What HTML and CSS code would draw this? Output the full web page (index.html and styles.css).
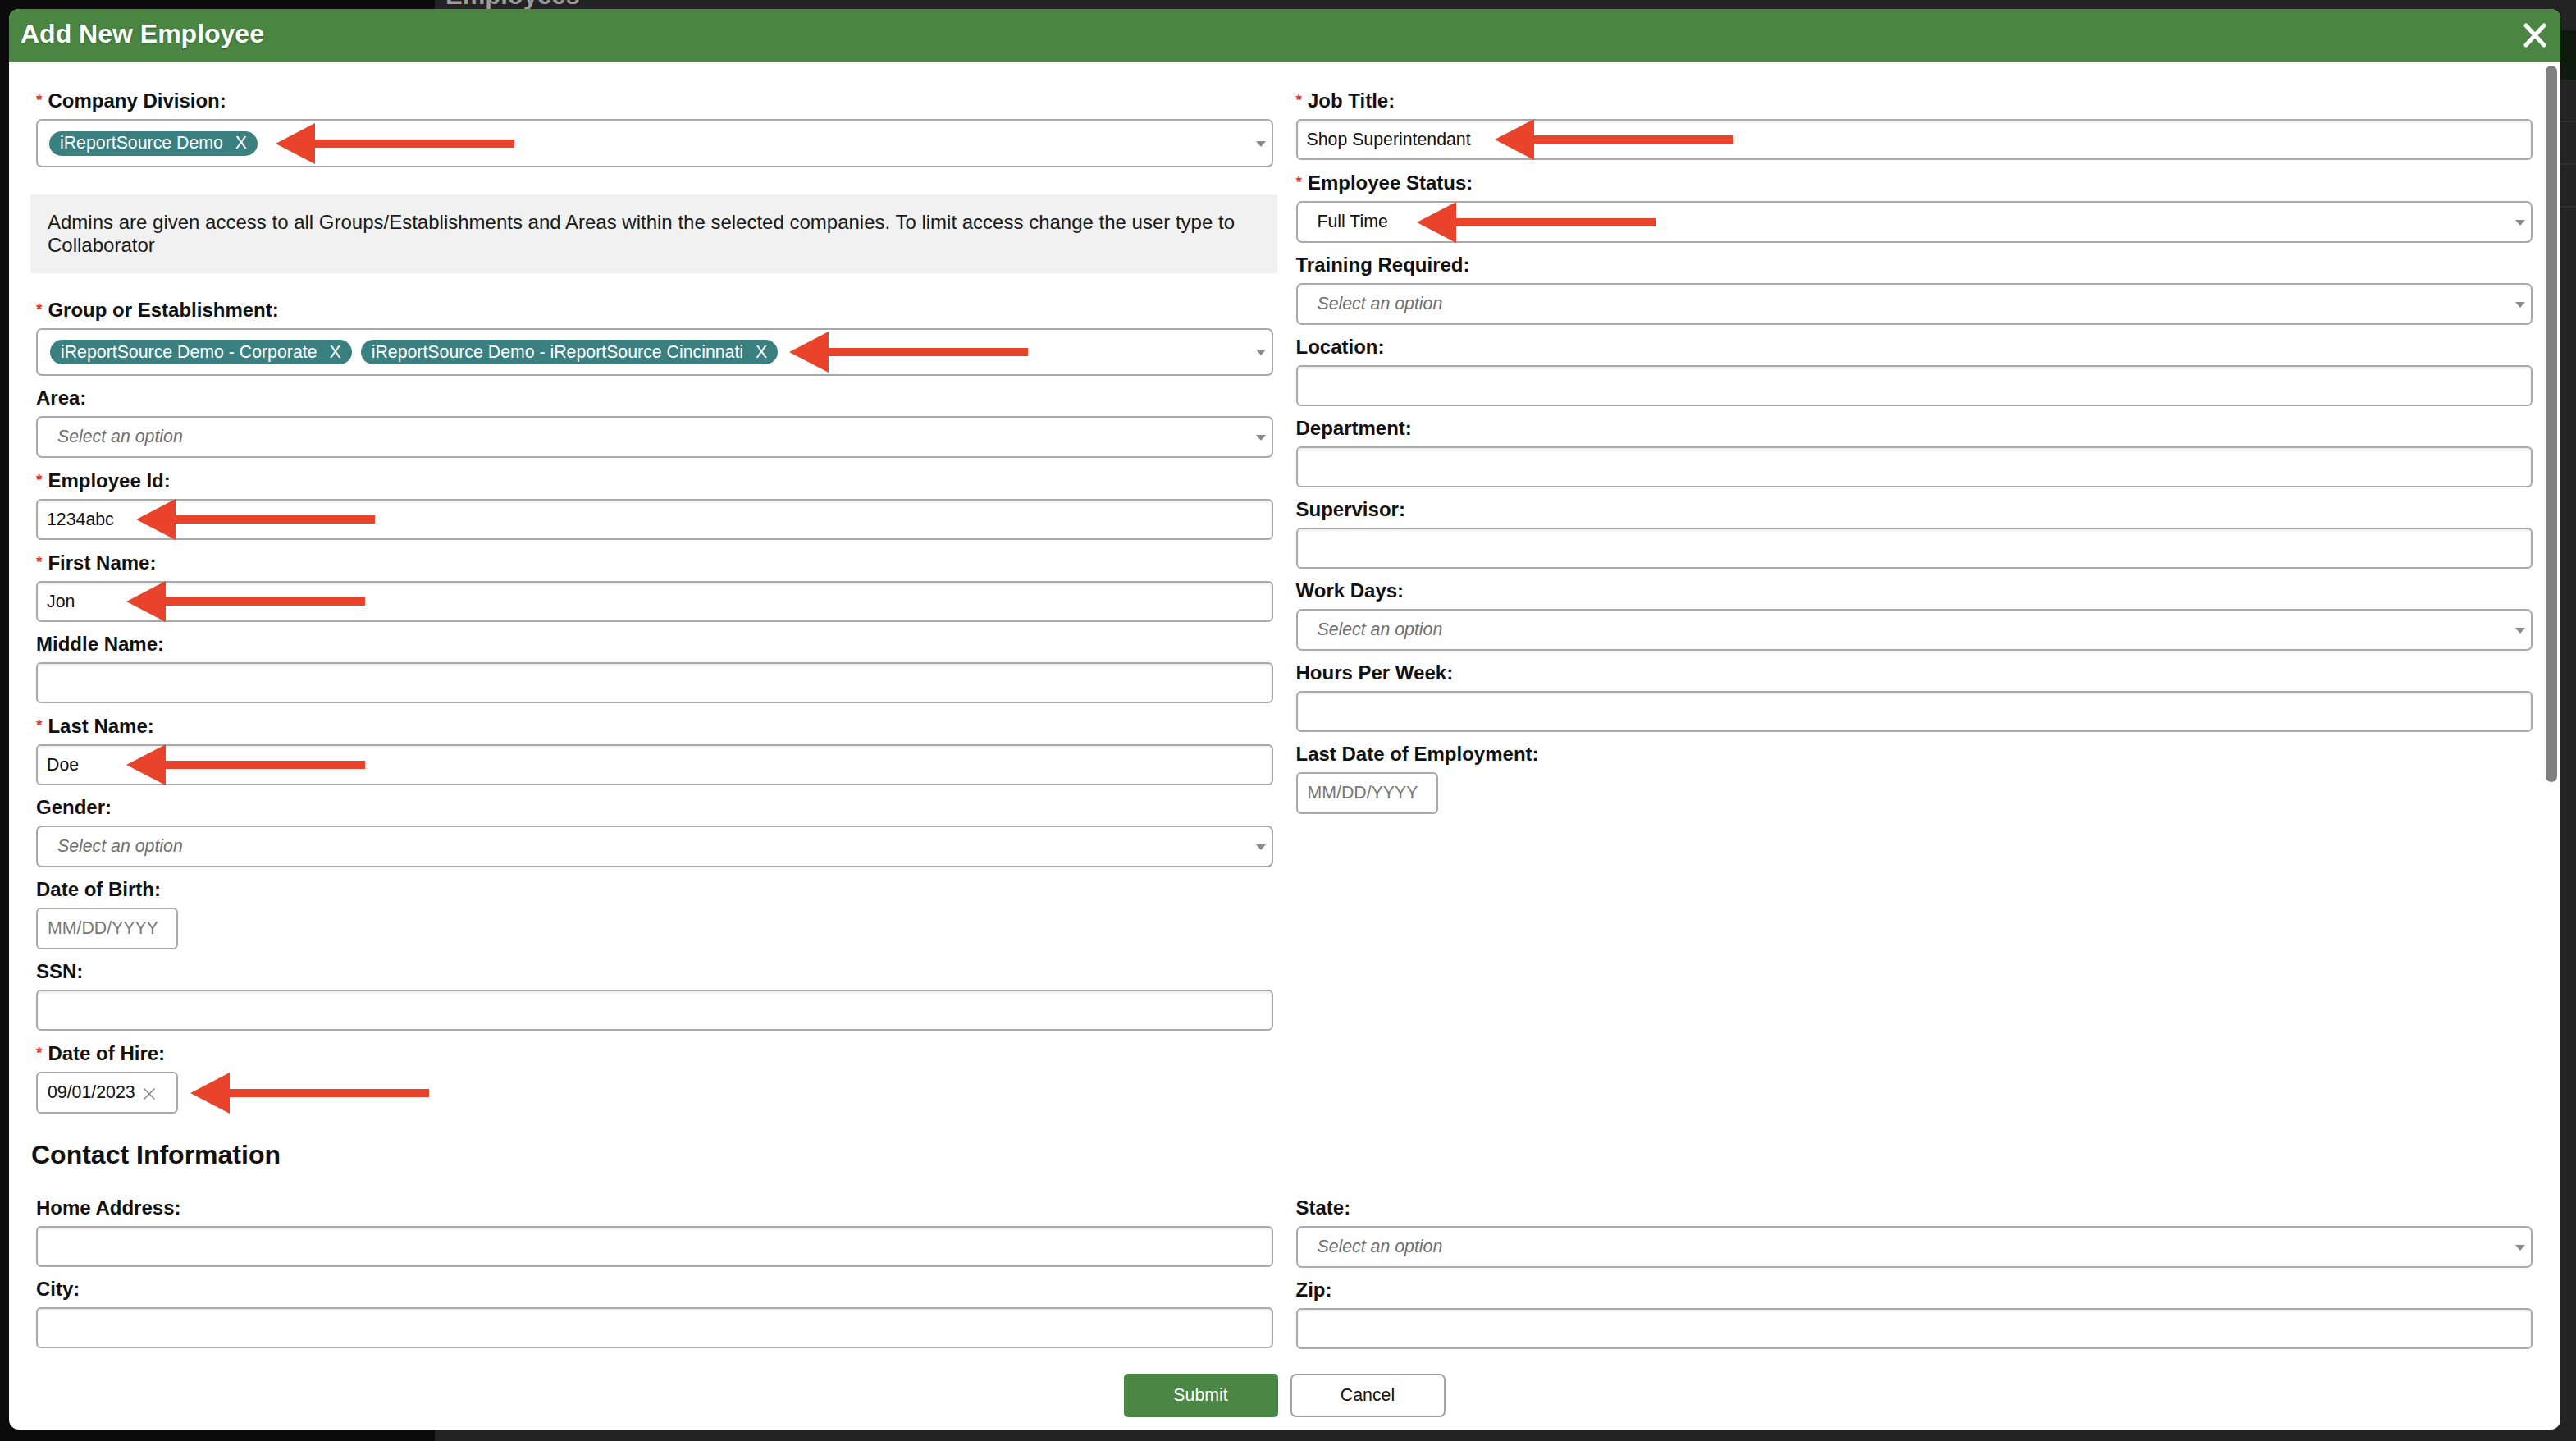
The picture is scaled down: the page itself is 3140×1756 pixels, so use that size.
FILE: index.html
```html
<!DOCTYPE html>
<html lang="en">
<head>
<meta charset="utf-8">
<title>Add New Employee</title>
<link rel="stylesheet" href="styles.css">
</head>
<body>
<aside class="sidebar"></aside>
<main class="page">
  <h1 class="page-title">Employees</h1>
  <div class="page-toolbar"></div>
  <div class="page-row"></div>
  <div class="page-row"></div>
  <div class="page-row"></div>
</main>

<div class="modal">
  <header class="modal-header">
    <h2 class="modal-title">Add New Employee</h2>
    <svg class="close" width="30" height="30" viewBox="0 0 30 30"><path d="M4 3 L26 27 M26 3 L4 27" stroke="#fff" stroke-width="5" stroke-linecap="round"/></svg>
  </header>

  <div class="modal-body">
    <div class="cols">
      <div class="col">
        <div class="field">
          <label class="lbl"><span class="req">*</span>Company Division:</label>
          <div class="control">
            <div class="select multi"><span class="tag">iReportSource Demo<span class="x">X</span></span></div>
            <svg class="arrow a-company" viewBox="0 0 291 50"><path d="M0 25 L48 0 L48 20 L291 20 L291 30 L48 30 L48 50 Z"/></svg>
          </div>
        </div>
        <div class="info">Admins are given access to all Groups/Establishments and Areas within the selected companies. To limit access change the user type to Collaborator</div>
        <div class="field">
          <label class="lbl"><span class="req">*</span>Group or Establishment:</label>
          <div class="control">
            <div class="select multi multi-group"><span class="tag">iReportSource Demo - Corporate<span class="x">X</span></span><span class="tag">iReportSource Demo - iReportSource Cincinnati<span class="x">X</span></span></div>
            <svg class="arrow a-group" viewBox="0 0 291 50"><path d="M0 25 L48 0 L48 20 L291 20 L291 30 L48 30 L48 50 Z"/></svg>
          </div>
        </div>
        <div class="field">
          <label class="lbl">Area:</label>
          <div class="select"><span class="placeholder">Select an option</span></div>
        </div>
        <div class="field">
          <label class="lbl"><span class="req">*</span>Employee Id:</label>
          <div class="control">
            <input class="input" type="text" value="1234abc">
            <svg class="arrow a-empid" viewBox="0 0 291 50"><path d="M0 25 L48 0 L48 20 L291 20 L291 30 L48 30 L48 50 Z"/></svg>
          </div>
        </div>
        <div class="field">
          <label class="lbl"><span class="req">*</span>First Name:</label>
          <div class="control">
            <input class="input" type="text" value="Jon">
            <svg class="arrow a-name" viewBox="0 0 291 50"><path d="M0 25 L48 0 L48 20 L291 20 L291 30 L48 30 L48 50 Z"/></svg>
          </div>
        </div>
        <div class="field">
          <label class="lbl">Middle Name:</label>
          <input class="input" type="text" value="">
        </div>
        <div class="field">
          <label class="lbl"><span class="req">*</span>Last Name:</label>
          <div class="control">
            <input class="input" type="text" value="Doe">
            <svg class="arrow a-name" viewBox="0 0 291 50"><path d="M0 25 L48 0 L48 20 L291 20 L291 30 L48 30 L48 50 Z"/></svg>
          </div>
        </div>
        <div class="field">
          <label class="lbl">Gender:</label>
          <div class="select"><span class="placeholder">Select an option</span></div>
        </div>
        <div class="field">
          <label class="lbl">Date of Birth:</label>
          <input class="input date" type="text" placeholder="MM/DD/YYYY">
        </div>
        <div class="field">
          <label class="lbl">SSN:</label>
          <input class="input" type="text" value="">
        </div>
        <div class="field">
          <label class="lbl"><span class="req">*</span>Date of Hire:</label>
          <div class="control">
            <div class="input date date-filled"><span>09/01/2023</span><svg class="clear" width="16" height="16" viewBox="0 0 16 16"><path d="M1.5 1.5 L14.5 14.5 M14.5 1.5 L1.5 14.5" stroke="#8a8a8a" stroke-width="1.6"/></svg></div>
            <svg class="arrow a-hire" viewBox="0 0 291 50"><path d="M0 25 L48 0 L48 20 L291 20 L291 30 L48 30 L48 50 Z"/></svg>
          </div>
        </div>
      </div>

      <div class="col">
        <div class="field">
          <label class="lbl"><span class="req">*</span>Job Title:</label>
          <div class="control">
            <input class="input" type="text" value="Shop Superintendant">
            <svg class="arrow a-job" viewBox="0 0 291 50"><path d="M0 25 L48 0 L48 20 L291 20 L291 30 L48 30 L48 50 Z"/></svg>
          </div>
        </div>
        <div class="field">
          <label class="lbl"><span class="req">*</span>Employee Status:</label>
          <div class="control">
            <div class="select"><span>Full Time</span></div>
            <svg class="arrow a-status" viewBox="0 0 291 50"><path d="M0 25 L48 0 L48 20 L291 20 L291 30 L48 30 L48 50 Z"/></svg>
          </div>
        </div>
        <div class="field">
          <label class="lbl">Training Required:</label>
          <div class="select"><span class="placeholder">Select an option</span></div>
        </div>
        <div class="field">
          <label class="lbl">Location:</label>
          <input class="input" type="text" value="">
        </div>
        <div class="field">
          <label class="lbl">Department:</label>
          <input class="input" type="text" value="">
        </div>
        <div class="field">
          <label class="lbl">Supervisor:</label>
          <input class="input" type="text" value="">
        </div>
        <div class="field">
          <label class="lbl">Work Days:</label>
          <div class="select"><span class="placeholder">Select an option</span></div>
        </div>
        <div class="field">
          <label class="lbl">Hours Per Week:</label>
          <input class="input" type="text" value="">
        </div>
        <div class="field">
          <label class="lbl">Last Date of Employment:</label>
          <input class="input date" type="text" placeholder="MM/DD/YYYY">
        </div>
      </div>
    </div>

    <h3 class="section">Contact Information</h3>

    <div class="cols">
      <div class="col">
        <div class="field">
          <label class="lbl">Home Address:</label>
          <input class="input" type="text" value="">
        </div>
        <div class="field">
          <label class="lbl">City:</label>
          <input class="input" type="text" value="">
        </div>
      </div>
      <div class="col">
        <div class="field">
          <label class="lbl">State:</label>
          <div class="select"><span class="placeholder">Select an option</span></div>
        </div>
        <div class="field">
          <label class="lbl">Zip:</label>
          <input class="input" type="text" value="">
        </div>
      </div>
    </div>

    <div class="actions">
      <button class="btn btn-submit" type="button">Submit</button>
      <button class="btn btn-cancel" type="button">Cancel</button>
    </div>
  </div>

  <div class="scroll-thumb"></div>
</div>
</body>
</html>
```

FILE: styles.css
```css
* { box-sizing: border-box; }

html, body {
  margin: 0;
  height: 100%;
}

body {
  font-family: "Liberation Sans", Arial, Helvetica, sans-serif;
  color: #111;
  display: flex;
  overflow: hidden;
  background: #232323;
}

/* background page */
.sidebar {
  width: 530px;
  flex-shrink: 0;
  background: #0b0b0b;
}

.page {
  flex: 1;
  background: #232323;
}

.page-title {
  margin: -24px 0 0 13px;
  font-size: 31px;
  line-height: 37px;
  font-weight: bold;
  color: #9d9d9d;
}

.page-toolbar {
  margin-top: 24px;
  height: 60px;
  background: #0e190e;
}

.page-row {
  height: 52px;
  border-bottom: 2px solid #2f2f2f;
}

/* modal */
.modal {
  position: fixed;
  left: 11px;
  top: 11px;
  width: 3110px;
  height: 1731px;
  background: #fff;
  border-radius: 12px;
  overflow: hidden;
  display: flex;
  flex-direction: column;
}

.modal-header {
  height: 64px;
  flex-shrink: 0;
  background: #4a8541;
  display: flex;
  align-items: flex-start;
  justify-content: space-between;
  padding: 12px 16px 0 14px;
}

.modal-title {
  margin: 0;
  font-size: 32px;
  line-height: 37px;
  font-weight: bold;
  color: #fff;
  text-shadow: 0 1px 2px rgba(0, 0, 0, 0.35);
}

.close {
  margin-top: 5px;
}

.modal-body {
  flex: 1;
  position: relative;
  padding: 33px 27px 0 26px;
}

.cols {
  display: grid;
  grid-template-columns: 1fr 1fr;
  column-gap: 14px;
  align-items: start;
}

.field {
  padding: 0 7px;
  margin-bottom: 13px;
}

.lbl {
  display: block;
  font-size: 24px;
  line-height: 28px;
  font-weight: bold;
  color: #111;
  margin-bottom: 8px;
}

.req {
  color: #e2352a;
  font-size: 19px;
  margin-right: 7px;
  vertical-align: 3px;
}

.control {
  position: relative;
}

.input {
  display: block;
  width: 100%;
  height: 50px;
  margin: 0;
  border: 2px solid #a9a9a9;
  border-radius: 6px;
  box-shadow: inset 0 2px 3px rgba(0, 0, 0, 0.08);
  background: #fff;
  padding: 0 11px;
  font-family: "Liberation Sans", Arial, Helvetica, sans-serif;
  font-size: 21.3px;
  color: #111;
  outline: none;
}

.input::placeholder {
  color: #777;
  opacity: 1;
}

.date {
  width: 173px;
  height: 51px;
  padding: 0 12px;
  box-shadow: none;
}

.date-filled {
  display: flex;
  align-items: center;
}

.clear {
  margin-left: 9px;
  margin-top: 2px;
}

.select {
  position: relative;
  height: 51px;
  border: 2px solid #a9a9a9;
  border-radius: 7px;
  background: #fff;
  display: flex;
  align-items: center;
  padding: 0 40px 0 24px;
  font-size: 21.3px;
  color: #111;
  white-space: nowrap;
}

.select::after {
  content: "";
  position: absolute;
  right: 7px;
  top: 50%;
  margin-top: -3px;
  border-left: 6px solid transparent;
  border-right: 6px solid transparent;
  border-top: 7px solid #8a8a8a;
}

.placeholder {
  font-style: italic;
  color: #6f6f6f;
}

.multi {
  height: 59px;
  padding-left: 14px;
  gap: 11px;
}

.multi-group {
  height: 58px;
  padding-left: 15px;
}

.tag {
  display: inline-flex;
  align-items: center;
  height: 30px;
  border-radius: 15px;
  padding: 0 13px;
  background: #3a8080;
  color: #fff;
  font-size: 21.3px;
}

.tag .x {
  margin-left: 15px;
}

.info {
  background: #f0f1f0;
  margin: 33px 2px 30px 0;
  padding: 20px 21px;
  font-size: 24px;
  line-height: 28px;
  color: #1a1a1a;
}

.section {
  margin: 19px 0 32px 1px;
  font-size: 32px;
  line-height: 37px;
  font-weight: bold;
  color: #111;
}

.actions {
  display: flex;
  justify-content: center;
  gap: 15px;
  margin-top: 17px;
}

.btn {
  height: 53px;
  font-family: "Liberation Sans", Arial, Helvetica, sans-serif;
  font-size: 21.3px;
  cursor: pointer;
}

.btn-submit {
  width: 188px;
  border: none;
  border-radius: 5px;
  background: #4b8744;
  color: #fff;
}

.btn-cancel {
  width: 189px;
  border: 2px solid #a3a3a3;
  border-radius: 7px;
  background: #fff;
  color: #111;
}

/* annotation arrows */
.arrow {
  position: absolute;
  top: 50%;
  margin-top: -25px;
  width: 291px;
  height: 50px;
  fill: #e9432b;
  pointer-events: none;
}

.a-company { left: 292px; }
.a-group { left: 918px; }
.a-empid { left: 122px; }
.a-name { left: 110px; }
.a-hire { left: 188px; }
.a-job { left: 242px; }
.a-status { left: 147px; }

.scroll-thumb {
  position: absolute;
  right: 4px;
  top: 69px;
  width: 14px;
  height: 873px;
  border-radius: 7px;
  background: #808080;
}
```
